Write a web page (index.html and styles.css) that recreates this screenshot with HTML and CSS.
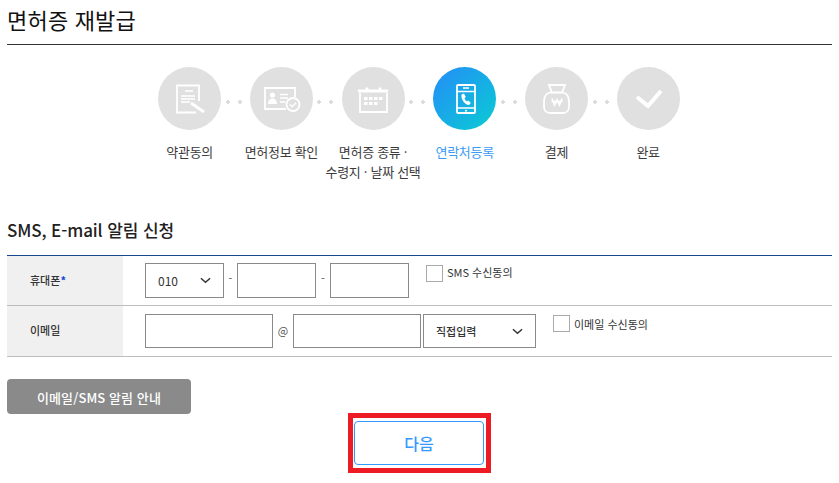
FILE: index.html
```html
<!DOCTYPE html>
<html lang="ko">
<head>
<meta charset="utf-8">
<title>면허증 재발급</title>
<link rel="stylesheet" href="styles.css">
</head>
<body>
<main class="page">
  <h1 class="title">면허증 재발급</h1>
  <ol class="steps">
    <li class="step">
      <span class="circle"><svg viewBox="0 0 63 63" class="ico"><path d="M41 34V18.500H19v27h19"/><path class="thin" d="M27 24h8M23 29h14M23 32h14M23 35h9"/><path class="thick" d="M33 36l13 9"/></svg></span>
      <span class="dots"></span>
      <span class="label">약관동의</span>
    </li>
    <li class="step">
      <span class="circle"><svg viewBox="0 0 63 63" class="ico"><path d="M36 42H15V21h30v9"/><path class="thin" d="M30 27.500h8M30 31h8M30 35h5"/><circle class="fill" cx="22.500" cy="28" r="2.600"/><path class="fill" d="M18 37c0-7.500 9-7.500 9 0z"/><circle cx="43" cy="37.500" r="6.500"/><path class="thin" d="M40 37.500l2.200 2.200 3.800-4"/></svg></span>
      <span class="dots"></span>
      <span class="label">면허정보 확인</span>
    </li>
    <li class="step">
      <span class="circle"><svg viewBox="0 0 63 63" class="ico"><path d="M18 26v19h27V26"/><path class="thick" d="M16 24h30M25 20.500v5M38 20.500v5"/><path class="fill" d="M22 30h3.500v3H22zM27 30h3.500v3H27zM32 30h3.500v3H32zM37 30h3.500v3H37zM22 35h3.500v3H22zM27 35h3.500v3H27zM32 35h3.500v3H32z"/></svg></span>
      <span class="dots"></span>
      <span class="label">면허증 종류 ·<br>수령지 · 날짜 선택</span>
    </li>
    <li class="step active">
      <span class="circle"><svg viewBox="0 0 63 63" class="ico"><rect x="24" y="18" width="18" height="28" rx="1"/><path class="thin" d="M24 24.500h18M24 41h18M30 21h6"/><path class="fill" d="M28.500 27.500l2.500-1 1.800 3.500-1.300 1.200c.5 1.500 1.300 2.500 2.300 3.200l1.500-1 2.500 2.600-1.800 2c-3.800.2-8.500-6-7.500-10.500z"/><circle class="fill" cx="33" cy="43.800" r="1"/></svg></span>
      <span class="dots"></span>
      <span class="label">연락처등록</span>
    </li>
    <li class="step">
      <span class="circle"><svg viewBox="0 0 63 63" class="ico"><path d="M24 18h16l-3 7.500H27zM27 25.500h-2c-4 1-6 5-6 9v5c0 4 2.500 6.500 6 6.500h13c3.500 0 6-2.500 6-6.500v-5c0-4-2-8-6-9h-2"/><path class="thin2" d="M27 31.500l2.500 6.500 2.500-5 2.500 5 2.500-6.500M26.500 34.500h11"/></svg></span>
      <span class="dots"></span>
      <span class="label">결제</span>
    </li>
    <li class="step">
      <span class="circle"><svg viewBox="0 0 63 63" class="ico check"><path d="M20 30l11 9 13-15"/></svg></span>
      <span class="label">완료</span>
    </li>
  </ol>

  <h2 class="subtitle">SMS, E-mail 알림 신청</h2>
  <div class="form">
    <div class="row">
      <div class="head">휴대폰<b class="req">*</b></div>
      <div class="cells first">
        <span class="field select s-phone">010<svg viewBox="0 0 12 7" class="chev"><path d="M1 1l5 4.500L11 1"/></svg></span>
        <span class="sep">-</span>
        <span class="field i-phone"></span>
        <span class="sep wide">-</span>
        <span class="field i-phone"></span>
        <span class="agree a-sms"><span class="box"></span>SMS 수신동의</span>
      </div>
    </div>
    <div class="row second">
      <div class="head">이메일</div>
      <div class="cells">
        <span class="field i-mail"></span>
        <span class="at">@</span>
        <span class="field i-mail"></span>
        <span class="field select s-mail">직접입력<svg viewBox="0 0 12 7" class="chev"><path d="M1 1l5 4.500L11 1"/></svg></span>
        <span class="agree a-mail"><span class="box"></span>이메일 수신동의</span>
      </div>
    </div>
  </div>
  <button class="notice" type="button">이메일/SMS 알림 안내</button>
  <div class="next-wrap">
    <div class="highlight"><button class="next" type="button">다음</button></div>
  </div>
</main>
</body>
</html>
```

FILE: styles.css
```css
* { box-sizing: border-box; }
html, body { margin: 0; padding: 0; background: #fff; }
body {
  font-family: "Noto Sans CJK KR", "Noto Sans", sans-serif;
  color: #333;
  overflow: hidden;
}
.page { width: 825px; margin-left: 7px; height: 483px; }
.title {
  margin: 0;
  height: 45px;
  border-bottom: 1px solid #333;
  font-size: 22px;
  font-weight: 400;
  line-height: 38px;
  letter-spacing: 0.2px;
  color: #111;
}
.steps {
  list-style: none;
  margin: 22px 0 0 136.800px;
  padding: 0;
  display: flex;
  height: 125px;
}
.step {
  position: relative;
  width: 91.700px;
  display: flex;
  flex-direction: column;
  align-items: center;
}
.circle {
  width: 63px;
  height: 63px;
  border-radius: 50%;
  background: #e0e0e0;
  flex: none;
}
.ico { display: block; width: 63px; height: 63px; fill: none; stroke: #fff; stroke-width: 1.800; }
.ico .thin { stroke-width: 1.400; }
.ico .thin2 { stroke-width: 1.700; }
.ico .thick { stroke-width: 2.800; }
.ico .fill { fill: #fff; stroke: none; }
.ico.check { stroke-width: 4; }
.dots {
  position: absolute;
  top: 33px;
  left: 82px;
  width: 16px;
  height: 4px;
  background:
    radial-gradient(circle, #dcdcdc 1.600px, transparent 2.100px) left / 4px 4px no-repeat,
    radial-gradient(circle, #dcdcdc 1.600px, transparent 2.100px) right / 4px 4px no-repeat;
}
.label {
  margin-top: 12px;
  font-size: 13px;
  line-height: 20px;
  text-align: center;
  white-space: nowrap;
  color: #3c3c3c;
  letter-spacing: -0.3px;
}
.active .circle { background: linear-gradient(135deg, #2196f3 15%, #0cc6d6 90%); }
.active .label { color: #3b9bf5; }
.subtitle {
  margin: 0;
  padding-top: 26px;
  height: 64px;
  font-size: 17px;
  font-weight: 500;
  line-height: 24px;
  letter-spacing: -0.1px;
  color: #222;
}
.form { border-top: 1px solid #16498f; margin-top: -1px; }
.row { display: flex; height: 50px; border-bottom: 1px solid #bdbdbd; }
.row.second { height: 51px; }
.head {
  width: 116px;
  background: #f0f0f0;
  padding-left: 23px;
  font-size: 11px;
  font-weight: 500;
  line-height: 49px;
  color: #333;
  flex: none;
}
.req { color: #1a3fd0; font-weight: 700; }
.cells { display: flex; align-items: flex-start; padding: 7px 0 0 22px; }
.cells:not(.first) { padding-top: 8px; }
.field {
  display: flex;
  align-items: center;
  justify-content: space-between;
  border: 1px solid #8a8a8a;
  background: #fff;
  flex: none;
  font-size: 12px;
  color: #333;
}
.s-phone { width: 79px; height: 35px; padding: 0 12px; }
.i-phone { width: 79px; height: 35px; }
.i-mail { width: 128px; height: 34px; }
.s-mail { width: 113px; height: 34px; margin-left: 2px; padding: 0 12px; font-size: 11px; font-weight: 500; }
.chev { width: 11px; height: 7px; fill: none; stroke: #333; stroke-width: 1.600; }
.sep { width: 13px; text-align: center; font-size: 11px; line-height: 30px; color: #555; flex: none; }
.sep.wide { width: 14px; }
.at { width: 20px; text-align: center; font-size: 11px; line-height: 32px; color: #555; flex: none; }
.agree {
  display: flex;
  align-items: flex-start;
  font-size: 11px;
  color: #333;
  white-space: nowrap;
}
.a-sms { margin: 2px 0 0 17px; line-height: 14px; }
.a-mail { margin: 1px 0 0 17px; line-height: 18px; }
.box {
  width: 17px;
  height: 17px;
  border: 1px solid #aaa;
  background: #fff;
  margin-right: 4px;
}
.notice {
  display: block;
  margin-top: 22px;
  width: 184px;
  height: 35px;
  border: 0;
  border-radius: 4px;
  background: #8a8a8a;
  color: #fff;
  font: 500 13px/35px "Noto Sans CJK KR", sans-serif;
  letter-spacing: 0.1px;
}
.next-wrap { display: flex; justify-content: center; margin-top: -1px; }
.highlight {
  width: 143px;
  height: 60px;
  border: 5px solid #ed1c24;
  padding: 3px 1px;
}
.next {
  display: block;
  width: 130px;
  height: 44px;
  border: 1px solid #3399ff;
  border-radius: 4px;
  background: #fff;
  color: #3399ff;
  font: 500 16px "Noto Sans CJK KR", sans-serif;
}
```
